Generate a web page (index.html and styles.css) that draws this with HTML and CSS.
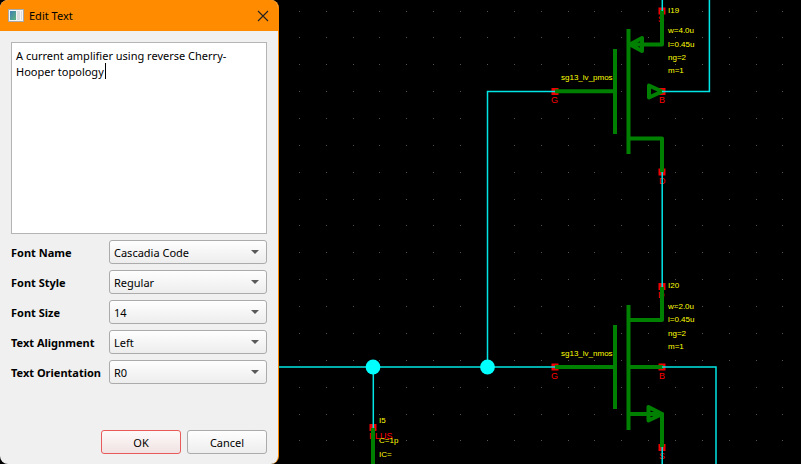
FILE: index.html
```html
<!DOCTYPE html>
<html lang="en">
<head>
    <meta charset="UTF-8">
    <meta name="viewport" content="width=device-width, initial-scale=1.0">
    <title>Edit Text</title>
    <link rel="stylesheet" href="styles.css">
</head>
<body>
<form class="dialog">
    <div class="title-bar">
        <svg class="app-icon" width="16" height="14" viewBox="0 0 16 14">
            <defs>
                <linearGradient id="screen" x1="0" y1="0" x2="1" y2="1">
                    <stop offset="0" stop-color="#3f7fb5"/>
                    <stop offset="1" stop-color="#5fb37c"/>
                </linearGradient>
            </defs>
            <rect x="0.5" y="0.5" width="15" height="12" fill="#f4f4f4" stroke="#a9a9a9"/>
            <rect x="2" y="2" width="6" height="9" fill="url(#screen)"/>
            <rect x="9" y="2" width="3" height="9" fill="#dcdcdc"/>
            <rect x="13" y="2" width="1" height="9" fill="#dcdcdc"/>
        </svg>
        <h1>Edit Text</h1>
        <button type="button" class="close-button" aria-label="Close">
            <svg width="12" height="12" viewBox="0 0 12 12"><path d="M1 1l10 10M11 1L1 11" stroke="#222" stroke-width="1.1"/></svg>
        </button>
    </div>

    <div class="dialog-body">
        <div class="text-box">
            <textarea id="labelText" aria-label="Text" spellcheck="false">A current amplifier using reverse Cherry-Hooper topology</textarea>
            <span class="caret"></span>
        </div>

        <div class="fields">
            <label for="fontName">Font Name</label>
            <select id="fontName"><option>Cascadia Code</option></select>
            <label for="fontStyle">Font Style</label>
            <select id="fontStyle"><option>Regular</option></select>
            <label for="fontSize">Font Size</label>
            <select id="fontSize"><option>14</option></select>
            <label for="textAlignment">Text Alignment</label>
            <select id="textAlignment"><option>Left</option></select>
            <label for="textOrientation">Text Orientation</label>
            <select id="textOrientation"><option>R0</option></select>
        </div>

        <div class="buttons">
            <button type="submit" class="button default">OK</button>
            <button type="button" class="button">Cancel</button>
        </div>
    </div>
</form>

<main class="schematic">
    <svg viewBox="279 0 522 464" preserveAspectRatio="xMinYMin slice">
        <!-- grid -->
        <defs>
            <path id="row" d="M299 0h1M326 0h1M353 0h1M379 0h1M406 0h1M433 0h1M460 0h1M487 0h1M514 0h1M541 0h1M568 0h1M594 0h1M621 0h1M648 0h1M675 0h1M702 0h1M729 0h1M756 0h1M782 0h1"/>
        </defs>
        <g class="grid">
            <use href="#row" y="11.5"/>
            <use href="#row" y="37.5"/>
            <use href="#row" y="64.5"/>
            <use href="#row" y="91.5"/>
            <use href="#row" y="118.5"/>
            <use href="#row" y="145.5"/>
            <use href="#row" y="172.5"/>
            <use href="#row" y="199.5"/>
            <use href="#row" y="225.5"/>
            <use href="#row" y="252.5"/>
            <use href="#row" y="279.5"/>
            <use href="#row" y="306.5"/>
            <use href="#row" y="333.5"/>
            <use href="#row" y="360.5"/>
            <use href="#row" y="387.5"/>
            <use href="#row" y="414.5"/>
            <use href="#row" y="440.5"/>
        </g>

        <!-- pins -->
        <g class="pin">
            <rect x="658.5" y="7.5" width="7" height="7"/>
            <rect x="551.5" y="88" width="7" height="7"/>
            <rect x="658.5" y="88" width="7" height="7"/>
            <rect x="658.5" y="168.5" width="7" height="7"/>
            <rect x="658.5" y="283" width="7" height="7"/>
            <rect x="551.5" y="363.5" width="7" height="7"/>
            <rect x="658.5" y="363.5" width="7" height="7"/>
            <rect x="658.5" y="444" width="7" height="7"/>
            <rect x="369.5" y="424" width="7" height="7"/>
        </g>

        <!-- devices -->
        <g class="device">
            <path d="M555 91.3H615M615 49V134M628.5 29V154M628.5 44.5H662V10M628.5 138.5H662V172"/>
            <path d="M630 44.5L642 38V51ZM649 85.5V97.5L662 91.5Z"/>
            <path d="M555 367H615M615 325V409M628.5 305V430M628.5 320H662V287M628.5 367H663M628.5 414H662V447"/>
            <path d="M648.5 407V420.5L662 414Z"/>
            <path d="M373 428V480"/>
        </g>

        <g class="pin-name">
            <text x="658" y="22">S</text>
            <text x="551" y="103">G</text>
            <text x="659" y="103">B</text>
            <text x="659" y="184">D</text>
            <text x="658" y="298">D</text>
            <text x="551" y="379">G</text>
            <text x="659" y="379">B</text>
            <text x="659" y="459">S</text>
            <text x="369" y="439">PLUS</text>
        </g>
        <path class="device" d="M662 14V30M662 290V306M373 430V441"/>

        <!-- wires -->
        <g class="wire">
            <path d="M662.3 0V11M662 91.6H709.4V0M555 91.6H487.5V367M662.2 172V287M662 367H716V480M662.2 447V480"/>
            <path d="M270 367H555M373.3 367V428"/>
        </g>
        <g class="junction">
            <circle cx="373" cy="367" r="7.4"/>
            <circle cx="487.5" cy="367" r="7.4"/>
        </g>

        <g class="label">
            <text x="561" y="80">sg13_lv_pmos</text>
            <text x="668" y="13">I19</text>
            <text x="668" y="33">w=4.0u</text>
            <text x="668" y="47">l=0.45u</text>
            <text x="668" y="60">ng=2</text>
            <text x="668" y="73">m=1</text>
            <text x="561" y="356">sg13_lv_nmos</text>
            <text x="668" y="288">I20</text>
            <text x="668" y="309">w=2.0u</text>
            <text x="668" y="322">l=0.45u</text>
            <text x="668" y="336">ng=2</text>
            <text x="668" y="349">m=1</text>
            <text x="379" y="423">I5</text>
            <text x="379" y="443">C=1p</text>
            <text x="379" y="457">IC=</text>
        </g>
    </svg>
</main>
</body>
</html>
```
FILE: styles.css
```css
* {
    box-sizing: border-box;
}
body {
    display: flex;
    height: 100vh;
    margin: 0;
    overflow: hidden;
    background-color: #000;
    color: #000;
    font-family: "Noto Sans", "Open Sans", sans-serif;
    font-size: 11px;
}
.dialog {
    display: flex;
    flex-direction: column;
    flex: none;
    width: 279px;
    border-right: 1px solid #ff8c00;
    border-radius: 8px;
    background-color: #f0f0f0;
    overflow: hidden;
}
.title-bar {
    display: flex;
    align-items: center;
    gap: 5px;
    height: 31px;
    padding: 0 8px;
    background-color: #ff8c00;
}
.title-bar h1 {
    flex: 1;
    margin: 0;
    font-size: 11px;
    font-weight: normal;
}
.close-button {
    display: flex;
    padding: 1px;
    border: none;
    background: none;
}
.dialog-body {
    display: flex;
    flex-direction: column;
    flex: 1;
    gap: 6px;
    padding: 11px 11px 10px;
}
.text-box {
    position: relative;
    display: flex;
    height: 192px;
}
textarea {
    width: 100%;
    padding: 5px 4px;
    border: 1px solid #b4b4b4;
    outline: none;
    resize: none;
    background-color: #fff;
    color: #000;
    font: inherit;
    line-height: 16px;
}
/* text cursor after the last word */
.caret {
    position: absolute;
    left: 94px;
    top: 21px;
    width: 1px;
    height: 16px;
    background-color: #000;
}
.fields {
    display: grid;
    grid-template-columns: 92px 1fr;
    grid-auto-rows: 24px;
    gap: 6px;
    align-items: center;
}
label {
    font-weight: bold;
    white-space: nowrap;
}
select, .button {
    height: 24px;
    border: 1px solid #ababab;
    border-radius: 3px;
    background: linear-gradient(#fefefe, #ededed);
    color: #000;
    font: inherit;
}
select {
    appearance: none;
    width: 100%;
    padding: 0 20px 0 4px;
    background: url("data:image/svg+xml,%3Csvg xmlns='http://www.w3.org/2000/svg' width='8' height='4'%3E%3Cpath d='M0 0h8L4 4z' fill='%23595959'/%3E%3C/svg%3E") no-repeat right 7px center, linear-gradient(#fefefe, #ededed);
}
.buttons {
    display: flex;
    justify-content: flex-end;
    gap: 6px;
    margin-top: auto;
}
.button {
    width: 80px;
    padding: 0;
}
.button.default {
    border-color: #e85a5a;
    background: linear-gradient(#fefafa, #f0e2e2);
}
.schematic {
    flex: 1;
    min-width: 0;
}
.schematic svg {
    display: block;
    width: 100%;
    height: 100%;
}
.grid {
    stroke: #555;
    stroke-width: 1;
}
.wire {
    fill: none;
    stroke: #00e6e6;
    stroke-width: 1.5;
}
.junction {
    fill: #00ffff;
}
.device {
    fill: none;
    stroke: #008000;
    stroke-width: 4;
    stroke-linejoin: round;
}
.pin {
    fill: #f00000;
}
.pin-name {
    fill: #ff0000;
    font-family: "Liberation Sans", Arial, sans-serif;
    font-size: 9px;
}
.label {
    fill: #ffff00;
    font-family: "Liberation Sans", Arial, sans-serif;
    font-size: 8px;
}
```
